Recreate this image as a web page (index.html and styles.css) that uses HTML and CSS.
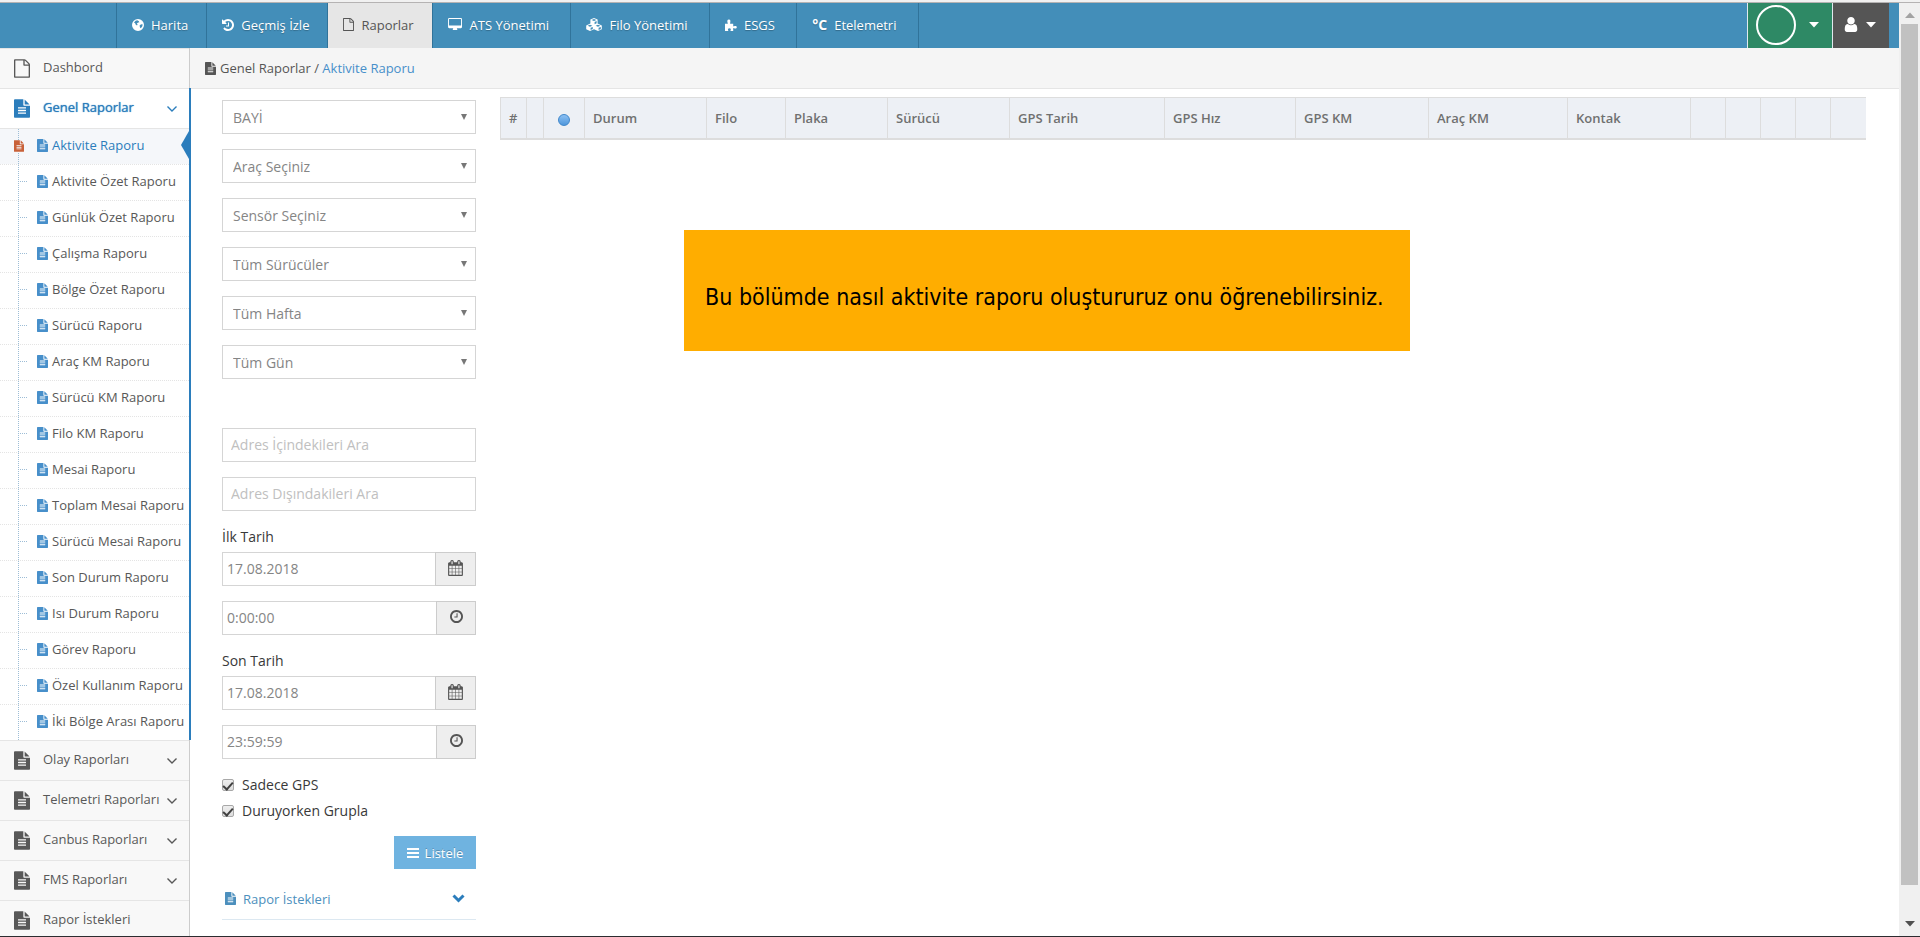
FILE: index.html
```
<!DOCTYPE html>
<html lang="tr">
<head>
<meta charset="utf-8">
<title>Aktivite Raporu</title>
<link rel="stylesheet" href="styles.css">
</head>
<body>
<svg class="sprite" aria-hidden="true">
  <symbol id="doc" viewBox="128 0 1536 1792"><path d="M1596 476q14 14 28 36h-472v-472q22 14 36 28zm-476 164h544v1056q0 40-28 68t-68 28h-1344q-40 0-68-28t-28-68v-1600q0-40 28-68t68-28h800v544q0 40 28 68t68 28zm160 736v-64q0-14-9-23t-23-9h-704q-14 0-23 9t-9 23v64q0 14 9 23t23 9h704q14 0 23-9t9-23zm0-256v-64q0-14-9-23t-23-9h-704q-14 0-23 9t-9 23v64q0 14 9 23t23 9h704q14 0 23-9t9-23zm0-256v-64q0-14-9-23t-23-9h-704q-14 0-23 9t-9 23v64q0 14 9 23t23 9h704q14 0 23-9t9-23z"/></symbol>
  <symbol id="doc-o" viewBox="128 0 1536 1792"><path d="M1596 380q28 28 48 76t20 88v1152q0 40-28 68t-68 28h-1344q-40 0-68-28t-28-68v-1600q0-40 28-68t68-28h896q40 0 88 20t76 48zm-444-244v376h376q-10-29-22-41l-313-313q-12-12-41-22zm384 1528v-1024h-416q-40 0-68-28t-28-68v-416h-768v1536h1280z"/></symbol>
  <symbol id="desktop" viewBox="0 0 1920 1792"><path d="M1728 992v-832q0-13-9.500-22.500t-22.500-9.500h-1600q-13 0-22.500 9.500t-9.500 22.500v832q0 13 9.500 22.500t22.500 9.500h1600q13 0 22.500-9.500t9.500-22.500zm128-832v1088q0 66-47 113t-113 47h-544q0 37 16 77.500t32 71 16 43.500q0 26-19 45t-45 19h-512q-26 0-45-19t-19-45q0-14 16-44t32-70 16-78h-544q-66 0-113-47t-47-113v-1088q0-66 47-113t113-47h1600q66 0 113 47t47 113z"/></symbol>
  <symbol id="calendar" viewBox="64 0 1664 1792"><path d="M192 1664h288v-288h-288v288zm352 0h320v-288h-320v288zm-352-352h288v-320h-288v320zm352 0h320v-320h-320v320zm-352-384h288v-288h-288v288zm736 736h320v-288h-320v288zm-384-736h320v-288h-320v288zm768 736h288v-288h-288v288zm-384-352h320v-320h-320v320zm-352-864v-288q0-13-9.500-22.500t-22.500-9.500h-64q-13 0-22.500 9.500t-9.500 22.500v288q0 13 9.500 22.500t22.500 9.500h64q13 0 22.500-9.500t9.500-22.500zm736 864h288v-320h-288v320zm-384-384h320v-288h-320v288zm384 0h288v-288h-288v288zm32-480v-288q0-13-9.500-22.500t-22.500-9.500h-64q-13 0-22.500 9.500t-9.500 22.500v288q0 13 9.500 22.500t22.500 9.500h64q13 0 22.500-9.500t9.500-22.500zm384-64v1280q0 52-38 90t-90 38h-1408q-52 0-90-38t-38-90v-1280q0-52 38-90t90-38h128v-96q0-66 47-113t113-47h64q66 0 113 47t47 113v96h384v-96q0-66 47-113t113-47h64q66 0 113 47t47 113v96h128q52 0 90 38t38 90z"/></symbol>
  <symbol id="clock" viewBox="128 128 1536 1536"><path d="M1024 544v448q0 14-9 23t-23 9h-320q-14 0-23-9t-9-23v-64q0-14 9-23t23-9h224v-352q0-14 9-23t23-9h64q14 0 23 9t9 23zm416 352q0-148-73-273t-198-198-273-73-273 73-198 198-73 273 73 273 198 198 273 73 273-73 198-198 73-273zm224 0q0 209-103 385.500t-279.500 279.500-385.500 103-385.500-103-279.500-279.500-103-385.500 103-385.500 279.500-279.500 385.500-103 385.500 103 279.500 279.500 103 385.500z"/></symbol>
  <symbol id="user" viewBox="256 128 1280 1536"><path d="M1536 1399q0 109-62.500 187t-150.500 78h-854q-88 0-150.500-78t-62.500-187q0-85 8.500-160.500t31.500-152 58.500-131 94-89 134.500-34.500q131 128 313 128t313-128q76 0 134.500 34.500t94 89 58.500 131 31.500 152 8.500 160.500zm-256-887q0 159-112.500 271.500t-271.500 112.500-271.500-112.500-112.500-271.500 112.500-271.500 271.500-112.500 271.500 112.500 112.500 271.500z"/></symbol>
  <symbol id="history" viewBox="128 128 1536 1536"><path d="M1664 896q0 156-61 298t-164 245-245 164-298 61q-172 0-327-72.500t-264-204.500q-7-10-6.500-22.500t8.500-20.500l137-138q10-9 25-9 16 2 23 12 73 95 179 147t225 52q104 0 198.500-40.500t163.500-109.500 109.500-163.500 40.500-198.500-40.500-198.500-109.500-163.500-163.500-109.500-198.500-40.500q-98 0-188 35.500t-160 101.500l137 138q31 30 14 69-17 40-59 40h-448q-26 0-45-19t-19-45v-448q0-42 40-59 39-17 69 14l130 129q107-101 244.500-156.500t284.500-55.500q156 0 298 61t245 164 164 245 61 298zm-640-288v448q0 14-9 23t-23 9h-320q-14 0-23-9t-9-23v-64q0-14 9-23t23-9h224v-352q0-14 9-23t23-9h64q14 0 23 9t9 23z"/></symbol>
  <symbol id="globe" viewBox="0 0 12 12"><path fill-rule="evenodd" d="M6 0a6 6 0 1 1 0 12a6 6 0 0 1 0-12zM3.600 1.700L2 3.400L3.200 4.200L3.600 5.600L5 6.400L5.600 5.400L4.800 4.600L6.200 3.600L7.400 3.200L6.600 1.900L5.200 1.300zM8.800 5.600L7.600 6.600L8 8.400L8.800 9.200L10.200 7.600L10.700 5.600L9.800 5.200z"/></symbol>
  <symbol id="cubes" viewBox="0 0 16 13"><path fill-rule="evenodd" d="M8 0l3.600 1.500v4L15.800 7.400v3.900L12 13L8 11.200L4 13L.2 11.300V7.400L4.400 5.500v-4zM5.600 2L8 3l2.400-1L8 1zM8.600 4v2.200l2-.9V3.100zM1.600 7.700L4 8.700l2.400-1L4 6.700zM4.600 9.800v2.100l2.200-1V8.900zM9.600 7.700l2.400 1l2.400-1l-2.400-1zM12.600 9.800v2.100l2.200-1V8.900z"/></symbol>
  <symbol id="puzzle" viewBox="0 0 12 12"><path d="M0 4.800h2.400c.6 0 .4-.5.200-1C2.100 2.500 2.200.6 3.900.6S5.600 2.500 5.200 3.700c-.2.600-.2 1.100.4 1.100h2.600v2c0 .7.400.8.900.5c1.200-.8 2.700-.4 2.700.9s-1.500 1.700-2.700 1c-.5-.3-.9-.2-.9.500V12H6c-.7 0-.6-.5-.3-1c.4-.9 0-1.800-1.300-1.800s-1.700.9-1.300 1.800c.3.500.3 1-.4 1H0z"/></symbol>
  <symbol id="lines" viewBox="0 0 12 10"><path d="M0 0h12v2H0zM0 4h12v2H0zM0 8h12v2H0z"/></symbol>
  <symbol id="caret" viewBox="0 0 10 6"><path d="M0 0h10L5 5.600z"/></symbol>
  <symbol id="angle" viewBox="0 0 10 6"><path d="M.5.500L5 5L9.500.500" fill="none" stroke="currentColor" stroke-width="1.400"/></symbol>
  <symbol id="chevron" viewBox="0 0 13 9"><path d="M1.500 1.500L6.500 6.500L11.500 1.500" fill="none" stroke="currentColor" stroke-width="3"/></symbol>
</svg>

<header class="topbar">
  <nav class="topnav" aria-label="Ana menü">
    <a class="topnav__link" href="#"><svg class="ico ico--12"><use href="#globe"/></svg>Harita</a>
    <a class="topnav__link" href="#"><svg class="ico ico--12"><use href="#history"/></svg>Geçmiş İzle</a>
    <a class="topnav__link topnav__link--active" href="#"><svg class="ico ico--file"><use href="#doc-o"/></svg>Raporlar</a>
    <a class="topnav__link" href="#"><svg class="ico ico--wide"><use href="#desktop"/></svg>ATS Yönetimi&nbsp;</a>
    <a class="topnav__link" href="#"><svg class="ico ico--cubes"><use href="#cubes"/></svg>Filo Yönetimi&nbsp;</a>
    <a class="topnav__link" href="#"><svg class="ico ico--12"><use href="#puzzle"/></svg>ESGS&nbsp;</a>
    <a class="topnav__link" href="#"><b class="degree">°C</b>Etelemetri&nbsp;</a>
  </nav>
  <div class="account">
    <button class="account__btn account__btn--company" type="button" aria-label="Firma"><span class="avatar"></span><svg class="ico ico--caret"><use href="#caret"/></svg></button>
    <button class="account__btn account__btn--user" type="button" aria-label="Kullanıcı"><svg class="ico ico--user"><use href="#user"/></svg><svg class="ico ico--caret"><use href="#caret"/></svg></button>
  </div>
</header>

<div class="body">
  <aside class="sidebar">
    <ul class="menu">
      <li class="menu__item"><a class="menu__link" href="#"><svg class="ico ico--menu"><use href="#doc-o"/></svg><span class="menu__text">Dashbord</span></a></li>
      <li class="menu__item menu__item--open">
        <a class="menu__link menu__link--active" href="#"><svg class="ico ico--menu"><use href="#doc"/></svg><span class="menu__text">Genel Raporlar</span><svg class="ico ico--angle"><use href="#angle"/></svg></a>
        <ul class="submenu">
          <li class="submenu__item submenu__item--active"><svg class="ico ico--marker"><use href="#doc"/></svg><a class="submenu__link" href="#"><svg class="ico ico--file"><use href="#doc"/></svg>Aktivite Raporu</a></li>
          <li class="submenu__item"><a class="submenu__link" href="#"><svg class="ico ico--file"><use href="#doc"/></svg>Aktivite Özet Raporu</a></li>
          <li class="submenu__item"><a class="submenu__link" href="#"><svg class="ico ico--file"><use href="#doc"/></svg>Günlük Özet Raporu</a></li>
          <li class="submenu__item"><a class="submenu__link" href="#"><svg class="ico ico--file"><use href="#doc"/></svg>Çalışma Raporu</a></li>
          <li class="submenu__item"><a class="submenu__link" href="#"><svg class="ico ico--file"><use href="#doc"/></svg>Bölge Özet Raporu</a></li>
          <li class="submenu__item"><a class="submenu__link" href="#"><svg class="ico ico--file"><use href="#doc"/></svg>Sürücü Raporu</a></li>
          <li class="submenu__item"><a class="submenu__link" href="#"><svg class="ico ico--file"><use href="#doc"/></svg>Araç KM Raporu</a></li>
          <li class="submenu__item"><a class="submenu__link" href="#"><svg class="ico ico--file"><use href="#doc"/></svg>Sürücü KM Raporu</a></li>
          <li class="submenu__item"><a class="submenu__link" href="#"><svg class="ico ico--file"><use href="#doc"/></svg>Filo KM Raporu</a></li>
          <li class="submenu__item"><a class="submenu__link" href="#"><svg class="ico ico--file"><use href="#doc"/></svg>Mesai Raporu</a></li>
          <li class="submenu__item"><a class="submenu__link" href="#"><svg class="ico ico--file"><use href="#doc"/></svg>Toplam Mesai Raporu</a></li>
          <li class="submenu__item"><a class="submenu__link" href="#"><svg class="ico ico--file"><use href="#doc"/></svg>Sürücü Mesai Raporu</a></li>
          <li class="submenu__item"><a class="submenu__link" href="#"><svg class="ico ico--file"><use href="#doc"/></svg>Son Durum Raporu</a></li>
          <li class="submenu__item"><a class="submenu__link" href="#"><svg class="ico ico--file"><use href="#doc"/></svg>Isı Durum Raporu</a></li>
          <li class="submenu__item"><a class="submenu__link" href="#"><svg class="ico ico--file"><use href="#doc"/></svg>Görev Raporu</a></li>
          <li class="submenu__item"><a class="submenu__link" href="#"><svg class="ico ico--file"><use href="#doc"/></svg>Özel Kullanım Raporu</a></li>
          <li class="submenu__item"><a class="submenu__link" href="#"><svg class="ico ico--file"><use href="#doc"/></svg>İki Bölge Arası Raporu</a></li>
        </ul>
      </li>
      <li class="menu__item"><a class="menu__link" href="#"><svg class="ico ico--menu"><use href="#doc"/></svg><span class="menu__text">Olay Raporları</span><svg class="ico ico--angle"><use href="#angle"/></svg></a></li>
      <li class="menu__item"><a class="menu__link" href="#"><svg class="ico ico--menu"><use href="#doc"/></svg><span class="menu__text">Telemetri Raporları</span><svg class="ico ico--angle"><use href="#angle"/></svg></a></li>
      <li class="menu__item"><a class="menu__link" href="#"><svg class="ico ico--menu"><use href="#doc"/></svg><span class="menu__text">Canbus Raporları</span><svg class="ico ico--angle"><use href="#angle"/></svg></a></li>
      <li class="menu__item"><a class="menu__link" href="#"><svg class="ico ico--menu"><use href="#doc"/></svg><span class="menu__text">FMS Raporları</span><svg class="ico ico--angle"><use href="#angle"/></svg></a></li>
      <li class="menu__item"><a class="menu__link" href="#"><svg class="ico ico--menu"><use href="#doc"/></svg><span class="menu__text">Rapor İstekleri</span></a></li>
    </ul>
  </aside>

  <main class="main">
    <div class="crumbs"><svg class="ico ico--file"><use href="#doc"/></svg><span>Genel Raporlar / <a class="crumbs__link" href="#">Aktivite Raporu</a></span></div>
    <div class="content">
      <form class="filters">
        <div class="filters__group">
          <select class="field field--select" aria-label="Bayi"><option>BAYİ</option></select>
          <select class="field field--select" aria-label="Araç"><option>Araç Seçiniz</option></select>
          <select class="field field--select" aria-label="Sensör"><option>Sensör Seçiniz</option></select>
          <select class="field field--select" aria-label="Sürücü"><option>Tüm Sürücüler</option></select>
          <select class="field field--select" aria-label="Hafta"><option>Tüm Hafta</option></select>
          <select class="field field--select" aria-label="Gün"><option>Tüm Gün</option></select>
        </div>
        <div class="filters__group filters__group--search">
          <input class="field field--text" type="text" placeholder="Adres İçindekileri Ara" aria-label="Adres İçindekileri Ara">
          <input class="field field--text" type="text" placeholder="Adres Dışındakileri Ara" aria-label="Adres Dışındakileri Ara">
        </div>
        <label class="filters__label" for="start-date">İlk Tarih</label>
        <div class="filters__group">
          <div class="addon"><input class="field addon__input" id="start-date" type="text" value="17.08.2018"><button class="addon__btn addon__btn--date" type="button" aria-label="Takvim"><svg class="ico ico--calendar"><use href="#calendar"/></svg></button></div>
          <div class="addon"><input class="field addon__input" type="text" value="0:00:00" aria-label="İlk saat"><button class="addon__btn" type="button" aria-label="Saat"><svg class="ico ico--clock"><use href="#clock"/></svg></button></div>
        </div>
        <label class="filters__label" for="end-date">Son Tarih</label>
        <div class="filters__group">
          <div class="addon"><input class="field addon__input" id="end-date" type="text" value="17.08.2018"><button class="addon__btn addon__btn--date" type="button" aria-label="Takvim"><svg class="ico ico--calendar"><use href="#calendar"/></svg></button></div>
          <div class="addon"><input class="field addon__input" type="text" value="23:59:59" aria-label="Son saat"><button class="addon__btn" type="button" aria-label="Saat"><svg class="ico ico--clock"><use href="#clock"/></svg></button></div>
        </div>
        <div class="checks">
          <label class="check"><input class="check__box" type="checkbox" checked>Sadece GPS</label>
          <label class="check"><input class="check__box" type="checkbox" checked>Duruyorken Grupla</label>
        </div>
        <button class="submit" type="button"><svg class="ico ico--lines"><use href="#lines"/></svg>Listele</button>
        <a class="requests" href="#"><svg class="ico ico--file"><use href="#doc"/></svg><span class="requests__text">Rapor İstekleri</span><svg class="ico ico--chevron"><use href="#chevron"/></svg></a>
      </form>

      <section class="report">
        <table class="grid">
          <colgroup><col class="w26"><col class="w17"><col class="w41"><col class="w122"><col class="w79"><col class="w102"><col class="w122"><col class="w155"><col class="w131"><col class="w133"><col class="w139"><col class="w123"><col class="w35"><col class="w35"><col class="w35"><col class="w35"><col class="w36"></colgroup>
          <thead><tr><th>#</th><th></th><th class="grid__dot"><span class="dot"></span></th><th>Durum</th><th>Filo</th><th>Plaka</th><th>Sürücü</th><th>GPS Tarih</th><th>GPS Hız</th><th>GPS KM</th><th>Araç KM</th><th>Kontak</th><th></th><th></th><th></th><th></th><th></th></tr></thead>
        </table>
        <p class="notice">Bu bölümde nasıl aktivite raporu oluştururuz onu öğrenebilirsiniz.</p>
      </section>
    </div>
  </main>
</div>

<div class="scroll" aria-hidden="true">
  <svg class="scroll__arrow scroll__arrow--up"><use href="#caret"/></svg>
  <div class="scroll__thumb"></div>
  <svg class="scroll__arrow"><use href="#caret"/></svg>
</div>
</body>
</html>
```
FILE: styles.css
```
* { box-sizing: border-box; }

body {
  margin: 0;
  height: 100vh;
  overflow: hidden;
  display: grid;
  grid-template-columns: 1fr 21px;
  grid-template-rows: 46px 1fr;
  border-top: 2px solid #f1f1f1;
  border-bottom: 1px solid #2c2c30;
  background: #fff;
  color: #393939;
  font: 13px/20px "Open Sans", sans-serif;
}

a { color: inherit; text-decoration: none; }
ul { list-style: none; margin: 0; padding: 0; }
button, input, select { font-family: inherit; }

.sprite { position: absolute; width: 0; height: 0; }
.ico { fill: currentColor; flex: none; width: 12px; height: 12px; }
.ico--file { width: 11px; height: 13px; }
.ico--wide { width: 15px; height: 13px; }
.ico--cubes { width: 16px; height: 13px; }
.ico--menu { width: 16px; height: 19px; }
.ico--angle { width: 10px; height: 6px; }
.ico--caret { width: 10px; height: 6px; }
.ico--user { width: 14px; height: 15px; }
.ico--calendar { width: 15px; height: 16px; }
.ico--clock { width: 13px; height: 13px; }
.ico--lines { width: 12px; height: 10px; }
.ico--chevron { width: 13px; height: 9px; }

/* Top bar */
.topbar { display: flex; justify-content: space-between; background: #438eb9; border-top: 1px solid #b5b3b3; }
.topnav { display: flex; margin-left: 116px; border-left: 1px solid #30739a; }
.topnav__link {
  display: flex;
  align-items: center;
  gap: 7px;
  padding: 0 18px 2px 15px;
  border-right: 1px solid #30739a;
  color: #fff;
  text-shadow: 0 1px 1px rgba(0, 0, 0, .25);
}
.topnav__link--active { background: #e6e6e6; color: #555; text-shadow: none; }
.degree { font-size: 14px; }

.account { display: flex; padding-right: 10px; }
.account__btn {
  display: flex;
  align-items: center;
  border: 0;
  border-left: 1px solid #e1e9ee;
  border-radius: 0;
  color: #fff;
}
.account__btn--company { width: 85px; gap: 13px; padding: 0 0 1px 8px; background: #2e8965; }
.account__btn--user { width: 57px; gap: 8px; padding: 0 0 2px 11px; background: #555; }
.avatar { width: 40px; height: 40px; border: 2px solid #fff; border-radius: 50%; }

/* Sidebar */
.body { display: flex; grid-row: 2; min-height: 0; }
.sidebar { flex: none; width: 190px; background: #f8f8f8; border-right: 1px solid #ccc; }
.menu__item { border-top: 1px solid #e5e5e5; color: #585858; }
.menu__item--open { position: relative; background: #fff; }
.menu__item--open::after {
  content: "";
  position: absolute;
  top: -1px;
  bottom: 0;
  right: -2px;
  width: 2px;
  background: #2b7dbc;
}
.menu__link { display: flex; align-items: center; gap: 13px; height: 39px; padding: 0 12px 0 14px; }
.menu__link--active { color: #2b7dbc; text-shadow: 0 0 1px #2b7dbc; }
.menu__text { flex: 1; white-space: nowrap; margin-right: -13px; padding-bottom: 4px; }

.submenu { position: relative; border-top: 1px solid #e5e5e5; }
.submenu::before {
  content: "";
  position: absolute;
  z-index: 1;
  top: 0;
  bottom: 0;
  left: 18px;
  border-left: 1px dotted #9dbdd6;
}
.submenu__item { position: relative; height: 36px; color: #585858; border-top: 1px dotted #e4e4e4; }
.submenu__item:first-child { height: 35px; border-top: 0; }
.submenu__item::before {
  content: "";
  position: absolute;
  left: 20px;
  top: 16px;
  width: 7px;
  border-top: 1px dotted #9dbdd6;
}
.submenu__link { display: flex; align-items: center; gap: 4px; height: 35px; padding: 0 0 4px 37px; white-space: nowrap; }
.submenu__link .ico { color: #478fca; margin-top: 2px; }
.submenu__item--active { background: #f5f7fa; color: #2b7dbc; }
.submenu__item--active::before { display: none; }
.submenu__item--active::after {
  content: "";
  position: absolute;
  top: 2px;
  right: 0;
  border: solid transparent;
  border-width: 14px 8px 14px 0;
  border-right-color: #2b7dbc;
}
.ico--marker { position: absolute; z-index: 2; left: 14px; top: 11px; width: 10px; height: 12px; color: #c86139; background: #f5f7fa; }

/* Main area */
.main { flex: 1; min-width: 0; }
.crumbs {
  display: flex;
  align-items: center;
  gap: 4px;
  height: 41px;
  padding: 0 15px;
  background: #f5f5f5;
  border-bottom: 1px solid #e5e5e5;
  color: #555;
}
.crumbs__link { color: #478fca; }
.content { display: flex; gap: 24px; padding: 8px 33px 0 32px; }

/* Filter form */
.filters { flex: none; width: 254px; padding-top: 3px; font-size: 14px; display: flex; flex-direction: column; }
.filters__group { display: flex; flex-direction: column; gap: 15px; }
.filters__group--search { margin-top: 49px; }
.filters__label { margin: 16px 0 5px; }
.field {
  width: 100%;
  height: 34px;
  border: 1px solid #d5d5d5;
  border-radius: 0;
  background: #fff;
  color: #858585;
  font-size: 14px;
}
.field--select {
  appearance: none;
  padding: 0 24px 0 10px;
  background: #fff url("data:image/svg+xml,%3Csvg xmlns='http://www.w3.org/2000/svg' width='6' height='6'%3E%3Cpath d='M0 0h6L3 6z' fill='%23777'/%3E%3C/svg%3E") no-repeat right 8px top 13px;
}
.field--text { padding: 0 8px 2px; }
.field::placeholder { color: #c0c0c0; opacity: 1; }
.addon { display: flex; }
.addon__input { flex: 1; min-width: 0; padding: 0 4px 2px; border-right: 0; }
.addon__btn {
  display: grid;
  place-items: center;
  width: 40px;
  height: 34px;
  padding: 0 0 3px;
  border: 1px solid #ccc;
  border-radius: 0;
  background: #eee;
  color: #555;
}
.addon__btn--date { width: 41px; }
.checks { display: flex; flex-direction: column; gap: 6px; margin-top: 16px; }
.check { display: flex; align-items: center; gap: 8px; }
.check__box {
  appearance: none;
  width: 12px;
  height: 12px;
  margin: 0;
  border: 1px solid #a8a8a8;
  border-radius: 2px;
  background: linear-gradient(#eee, #ddd);
  display: grid;
  place-items: center;
}
.check__box::after {
  content: "";
  width: 4px;
  height: 8px;
  margin-bottom: 2px;
  border: solid #404040;
  border-width: 0 2px 2px 0;
  transform: rotate(42deg);
}
.submit {
  align-self: flex-end;
  display: flex;
  align-items: center;
  justify-content: center;
  gap: 6px;
  width: 82px;
  height: 33px;
  margin-top: 15px;
  padding: 0;
  border: 0;
  background: #6fb3e0;
  color: #fff;
  font-size: 13px;
  text-shadow: 0 -1px 0 rgba(0, 0, 0, .25);
}
.requests {
  display: flex;
  align-items: center;
  gap: 7px;
  height: 42px;
  margin-top: 9px;
  padding: 0 11px 0 3px;
  border-bottom: 1px solid #dce8f1;
  color: #4c8fbd;
  font-size: 13px;
}
.requests__text { flex: 1; }
.requests .ico--chevron { color: #2b7dbc; }

/* Report table */
.report { flex: 1; min-width: 0; }
.grid { width: 100%; table-layout: fixed; border-collapse: separate; border-spacing: 0; border-top: 1px solid #ddd; border-bottom: 2px solid #ddd; }
.grid th {
  height: 40px;
  padding: 0 8px;
  border-left: 1px solid #ddd;
  background: #edf0f5;
  color: #707070;
  font-weight: 600;
  text-align: left;
  white-space: nowrap;
}
.grid .grid__dot { text-align: center; padding: 0; }
.dot { display: inline-block; vertical-align: middle; width: 12px; height: 12px; border: 1px solid #3f87cb; border-radius: 50%; background: linear-gradient(#8cc0f3, #4f97dc); }
.w17 { width: 17px; }
.w26 { width: 26px; }
.w35 { width: 35px; }
.w36 { width: 36px; }
.w41 { width: 41px; }
.w79 { width: 79px; }
.w102 { width: 102px; }
.w122 { width: 122px; }
.w123 { width: 123px; }
.w131 { width: 131px; }
.w133 { width: 133px; }
.w139 { width: 139px; }
.w155 { width: 155px; }

.notice {
  width: fit-content;
  margin: 90px 0 0 184px;
  padding: 51px 26px 38px 21px;
  background: #ffad00;
  color: #000;
  font: 23px/32px "DejaVu Sans Condensed", "DejaVu Sans", sans-serif;
}

/* Scroll bar */
.scroll {
  grid-column: 2;
  grid-row: 1 / 3;
  display: flex;
  flex-direction: column;
  align-items: center;
  padding: 9px 2px;
  border-top: 1px solid #b5b3b3;
  background: #f0f0f0;
}
.scroll__thumb { flex: 1; width: 17px; margin: 6px 0 36px; background: #c1c1c1; }
.scroll__arrow { width: 10px; height: 6px; fill: #505050; }
.scroll__arrow--up { transform: rotate(180deg); fill: #a3a3a3; }
```
